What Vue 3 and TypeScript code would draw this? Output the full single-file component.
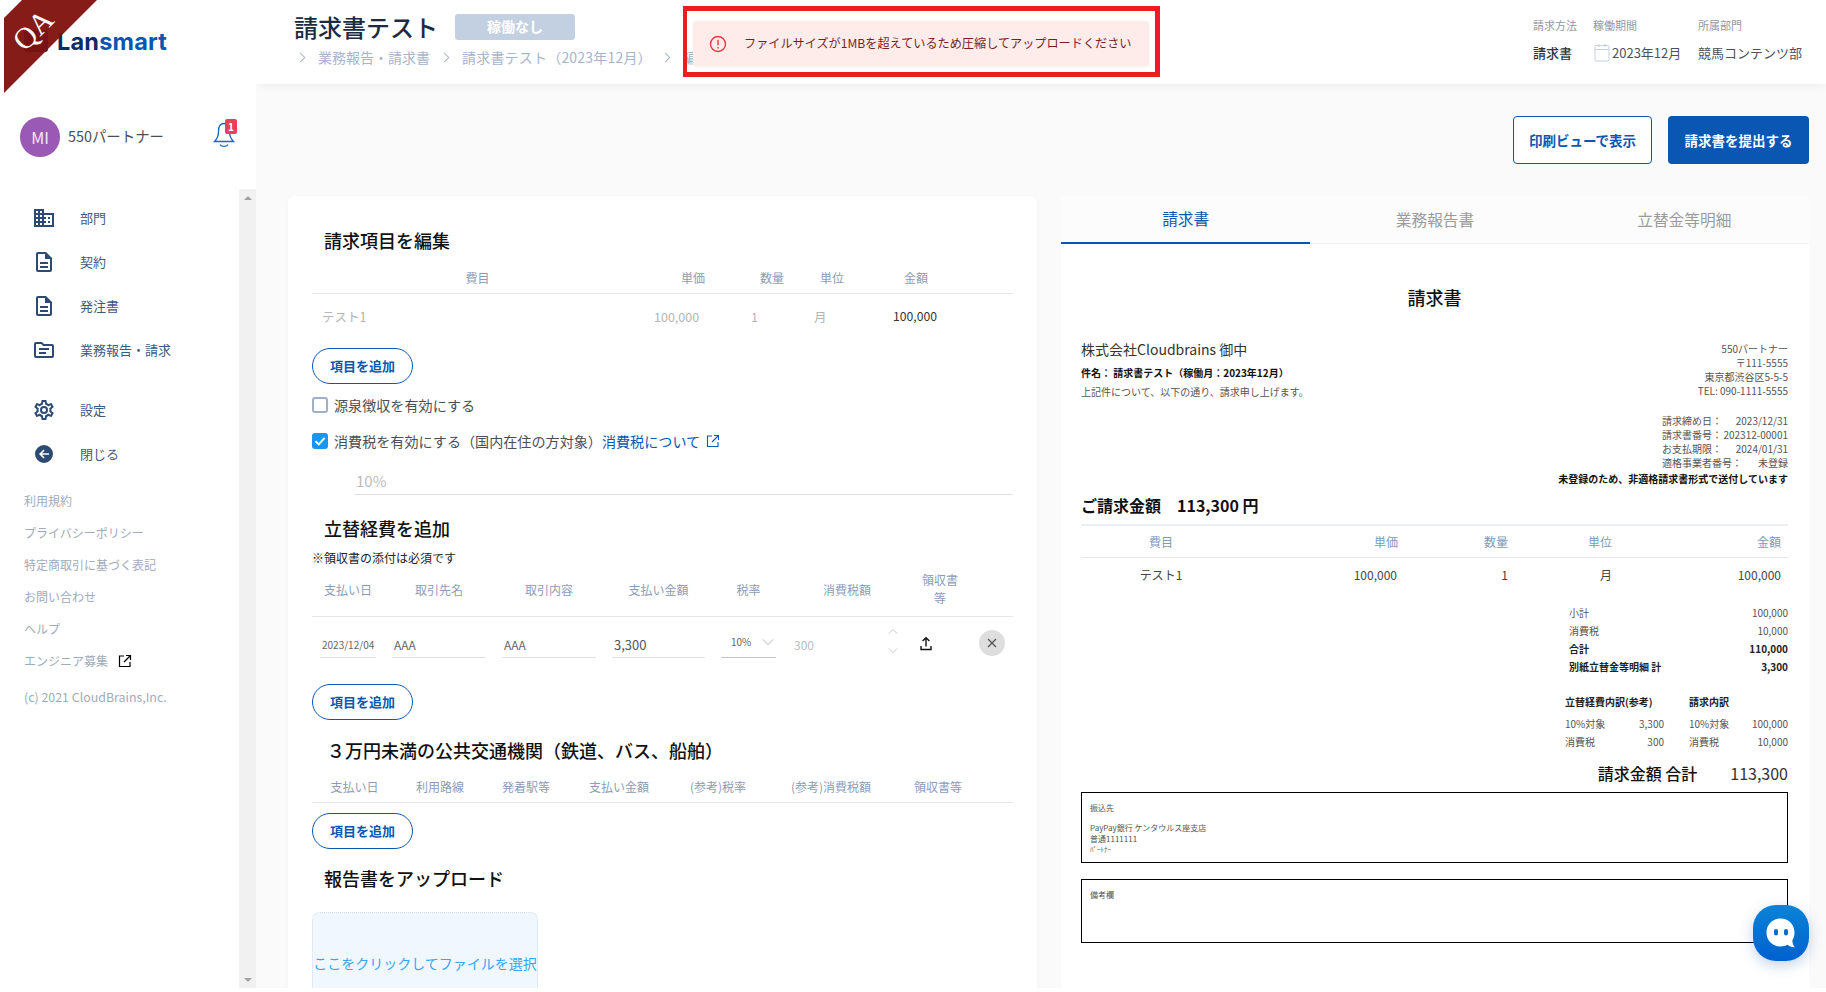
<script setup lang="ts">
interface NavItem { label: string; path: string }
const fileDoc = 'M6,2A2,2 0 0,0 4,4V20A2,2 0 0,0 6,22H18A2,2 0 0,0 20,20V8L14,2H6M6,4H13V9H18V20H6V4M8,12V14H16V12H8M8,16V18H16V16H8Z'
const nav1: NavItem[] = [
  { label: '部門', path: 'M18,15H16V17H18M18,11H16V13H18M20,19H12V17H14V15H12V13H14V11H12V9H20M10,7H8V5H10M10,11H8V9H10M10,15H8V13H10M10,19H8V17H10M6,7H4V5H6M6,11H4V9H6M6,15H4V13H6M6,19H4V17H6M12,7V3H2V21H22V7H12Z' },
  { label: '契約', path: fileDoc },
  { label: '発注書', path: fileDoc },
  { label: '業務報告・請求', path: 'M4,4H10L12,6H20A2,2 0 0,1 22,8V18A2,2 0 0,1 20,20H4A2,2 0 0,1 2,18V6A2,2 0 0,1 4,4M4,6V18H20V8H11.17L9.17,6H4M7,10H17V12H7V10M7,14H14V16H7V14Z' }
]
const cog = 'M12,8A4,4 0 0,1 16,12A4,4 0 0,1 12,16A4,4 0 0,1 8,12A4,4 0 0,1 12,8M12,10A2,2 0 0,0 10,12A2,2 0 0,0 12,14A2,2 0 0,0 14,12A2,2 0 0,0 12,10M10,22C9.75,22 9.54,21.82 9.5,21.58L9.13,18.93C8.5,18.68 7.96,18.34 7.44,17.94L4.95,18.95C4.73,19.03 4.46,18.95 4.34,18.73L2.34,15.27C2.21,15.05 2.27,14.78 2.46,14.63L4.57,12.97L4.5,12L4.57,11L2.46,9.37C2.27,9.22 2.21,8.95 2.34,8.73L4.34,5.27C4.46,5.05 4.73,4.96 4.95,5.05L7.44,6.05C7.96,5.66 8.5,5.32 9.13,5.07L9.5,2.42C9.54,2.18 9.75,2 10,2H14C14.25,2 14.46,2.18 14.5,2.42L14.87,5.07C15.5,5.32 16.04,5.66 16.56,6.05L19.05,5.05C19.27,4.96 19.54,5.05 19.66,5.27L21.66,8.73C21.79,8.95 21.73,9.22 21.54,9.37L19.43,11L19.5,12L19.43,13L21.54,14.63C21.73,14.78 21.79,15.05 21.66,15.27L19.66,18.73C19.54,18.95 19.27,19.04 19.05,18.95L16.56,17.95C16.04,18.34 15.5,18.68 14.87,18.93L14.5,21.58C14.46,21.82 14.25,22 14,22H10M11.25,4L10.88,6.61C9.68,6.86 8.62,7.5 7.85,8.39L5.44,7.35L4.69,8.65L6.8,10.2C6.4,11.37 6.4,12.64 6.8,13.8L4.68,15.36L5.43,16.66L7.86,15.62C8.63,16.5 9.68,17.14 10.87,17.38L11.24,20H12.76L13.13,17.39C14.32,17.14 15.37,16.5 16.14,15.62L18.57,16.66L19.32,15.36L17.2,13.81C17.6,12.64 17.6,11.37 17.2,10.2L19.31,8.65L18.56,7.35L16.15,8.39C15.38,7.5 14.32,6.86 13.12,6.62L12.75,4H11.25Z'
const back = 'M12,3A9,9 0 1,1 12,21A9,9 0 1,1 12,3M17,11.2H10L12.6,8.6L11.5,7.5L7,12L11.5,16.5L12.6,15.4L10,12.8H17Z'
const links: string[] = ['利用規約', 'プライバシーポリシー', '特定商取引に基づく表記', 'お問い合わせ', 'ヘルプ']
const head1: string[] = ['費目', '単価', '数量', '単位', '金額', '']
const head2: string[] = ['支払い日', '取引先名', '取引内容', '支払い金額', '税率', '消費税額', '領収書等', '']
const head3: string[] = ['支払い日', '利用路線', '発着駅等', '支払い金額', '(参考)税率', '(参考)消費税額', '領収書等', '']
const tabs: string[] = ['請求書', '業務報告書', '立替金等明細']
const issuer: string[] = ['550パートナー', '〒111-5555', '東京都渋谷区5-5-5', 'TEL: 090-1111-5555']
const dates: [string, string][] = [['請求締め日：', '2023/12/31'], ['請求書番号：', '202312-00001'], ['お支払期限：', '2024/01/31'], ['適格事業者番号：', '未登録']]
</script>

<template>
  <div class="page">
    <aside class="sidebar">
      <div class="side-top">
        <div class="logo">
          <svg class="logo-mark" viewBox="0 0 24 22" width="24" height="22"><rect x="0" y="0" width="24" height="22" rx="3" fill="#0a3a8a" /></svg>
          <span class="logo-text"><span class="lan">Lan</span><span class="smart">smart</span></span>
        </div>
        <div class="user">
          <div class="avatar">MI</div>
          <span class="user-name">550パートナー</span>
          <span class="bell">
            <svg viewBox="0 0 24 28" width="24" height="28" fill="none" stroke="#1668c4" stroke-width="1.3">
              <path d="M12 3.500C7.500 3.500 6.500 7.500 6.500 11.500C6.500 16 5 19 2.500 21.500H21.500C19 19 17.500 16 17.500 11.500C17.500 7.500 16.500 3.500 12 3.500Z" />
              <path d="M8 24.500C9.500 27 14.500 27 16 24.500" />
            </svg>
            <span class="bell-badge">1</span>
          </span>
        </div>
      </div>
      <div class="side-scroll">
        <div class="side-body">
          <nav class="nav">
            <a v-for="n in nav1" :key="n.label" class="nav-item">
              <svg viewBox="0 0 24 24" width="24" height="24" fill="#2d4a73"><path :d="n.path" /></svg>
              <span>{{ n.label }}</span>
            </a>
          </nav>
          <nav class="nav nav2">
            <a class="nav-item">
              <svg viewBox="0 0 24 24" width="24" height="24" fill="#2d4a73"><path :d="cog" /></svg>
              <span>設定</span>
            </a>
            <a class="nav-item">
              <svg viewBox="0 0 24 24" width="24" height="24" fill="#2d4a73" fill-rule="evenodd"><path :d="back" /></svg>
              <span>閉じる</span>
            </a>
          </nav>
          <div class="links">
            <a v-for="l in links" :key="l" class="link">{{ l }}</a>
            <a class="link">エンジニア募集
              <svg class="ext-black" viewBox="0 0 14 14" width="14" height="14" fill="none" stroke="#000" stroke-width="1.2">
                <path d="M6 2H1.5V12.5H12V8" /><path d="M8 1.5H12.5V6" /><path d="M12.5 1.5L6 8" />
              </svg>
            </a>
            <p class="copy">(c) 2021 CloudBrains,Inc.</p>
          </div>
        </div>
        <div class="scrollbar">
          <span class="arrow up"></span>
          <span class="arrow down"></span>
        </div>
      </div>
      <div class="qa"><span>QA</span></div>
    </aside>

    <main class="main">
      <header class="topbar">
        <div class="title-block">
          <div class="title-row">
            <h1>請求書テスト</h1>
            <span class="status">稼働なし</span>
          </div>
          <div class="crumbs">
            <i class="chev"></i><span>業務報告・請求書</span>
            <i class="chev"></i><span class="crumb-long">請求書テスト（2023年12月）</span>
            <i class="chev"></i><span>編集</span>
          </div>
        </div>
        <div class="meta">
          <span class="meta-label">請求方法</span>
          <span class="meta-label">稼働期間</span>
          <span class="meta-label">所属部門</span>
          <span class="meta-value strong">請求書</span>
          <span class="meta-value period">
            <svg viewBox="0 0 16 19" width="16" height="19" fill="none" stroke="#c5d0e0" stroke-width="1">
              <rect x="1" y="2.500" width="14" height="15.500" rx="1" /><path d="M1 6.500H15M5 1V4M11 1V4" />
            </svg>2023年12月
          </span>
          <span class="meta-value">競馬コンテンツ部</span>
        </div>
        <div class="alert-frame">
          <div class="alert">
            <svg viewBox="0 0 18 18" width="18" height="18" fill="none" stroke="#e8383d" stroke-width="1.4">
              <circle cx="9" cy="9" r="7.5" /><path d="M9 4.8V10.2M9 12V13.4" />
            </svg>
            <span>ファイルサイズが1MBを超えているため圧縮してアップロードください</span>
          </div>
        </div>
      </header>

      <div class="content">
        <div class="actions">
          <button class="btn ghost">印刷ビューで表示</button>
          <button class="btn solid">請求書を提出する</button>
        </div>
        <div class="columns">
          <section class="card">
            <h2>請求項目を編集</h2>
            <div class="grid g1 ghead h1row">
              <span v-for="(h, i) in head1" :key="i">{{ h }}</span>
            </div>
            <div class="row1">
              <span class="muted c1">テスト1</span>
              <span class="muted c2">100,000</span>
              <span class="muted c3">1</span>
              <span class="muted c4">月</span>
              <span class="c5">100,000</span>
            </div>
            <button class="pill first">項目を追加</button>
            <label class="check"><span class="box"></span>源泉徴収を有効にする</label>
            <label class="check second">
              <span class="box on">
                <svg viewBox="0 0 16 16" width="16" height="16" fill="none" stroke="#fff" stroke-width="2"><path d="M3.5 8.2L6.8 11.4L12.6 4.8" /></svg>
              </span>
              消費税を有効にする（国内在住の方対象）<a class="tax-link">消費税について</a>
              <svg class="ext-blue" viewBox="0 0 14 14" width="14" height="14" fill="none" stroke="#0a57b3" stroke-width="1.1">
                <path d="M6 2H1.5V12.5H12V8" /><path d="M8 1.5H12.5V6" /><path d="M12.5 1.5L6 8" />
              </svg>
            </label>
            <div class="rate">10%</div>

            <h2 class="h-exp">立替経費を追加</h2>
            <p class="note">※領収書の添付は必須です</p>
            <div class="grid g2 ghead h2row">
              <span v-for="(h, i) in head2" :key="i" :class="{ narrow: h === '領収書等' }">{{ h }}</span>
            </div>
            <div class="grid g2 row2">
              <div class="field date"><span>2023/12/04</span></div>
              <div class="field"><span>AAA</span></div>
              <div class="field"><span>AAA</span></div>
              <div class="field amount"><span>3,300</span></div>
              <div class="field select">
                <span>10%</span>
                <svg viewBox="0 0 12 8" width="12" height="8" fill="none" stroke="#b8b8b8" stroke-width="1"><path d="M1 1.5L6 6.5L11 1.5" /></svg>
              </div>
              <div class="tax">
                <span>300</span>
                <span class="spin">
                  <svg viewBox="0 0 12 8" width="10" height="7" fill="none" stroke="#bdbdbd" stroke-width="1"><path d="M1 6.5L6 1.5L11 6.5" /></svg>
                  <svg viewBox="0 0 12 8" width="10" height="7" fill="none" stroke="#bdbdbd" stroke-width="1"><path d="M1 1.5L6 6.5L11 1.5" /></svg>
                </span>
              </div>
              <div class="up-cell">
                <svg viewBox="0 0 14 16" width="14" height="16" fill="none" stroke="#111" stroke-width="1.4"><path d="M7 10.5V2M3.6 5L7 1.8L10.4 5" /><path d="M2 10V13.5H12V10" /></svg>
              </div>
              <div class="close-cell">
                <span class="close">
                  <svg viewBox="0 0 10 10" width="10" height="10" stroke="#555" stroke-width="1.3"><path d="M1 1L9 9M9 1L1 9" /></svg>
                </span>
              </div>
            </div>
            <button class="pill">項目を追加</button>

            <h2 class="h-transit">３万円未満の公共交通機関（鉄道、バス、船舶）</h2>
            <div class="grid g3 ghead h3row">
              <span v-for="(h, i) in head3" :key="i">{{ h }}</span>
            </div>
            <button class="pill third">項目を追加</button>

            <h2 class="h-report">報告書をアップロード</h2>
            <div class="drop">ここをクリックしてファイルを選択</div>
          </section>

          <section class="panel">
            <div class="tabs">
              <div v-for="(t, i) in tabs" :key="t" class="tab" :class="{ active: i === 0 }">{{ t }}</div>
            </div>
            <div class="invoice">
              <h3>請求書</h3>
              <div class="inv-top">
                <div class="inv-left">
                  <p class="to">株式会社Cloudbrains 御中</p>
                  <p class="subject">件名： 請求書テスト（稼働月：2023年12月）</p>
                  <p class="lead">上記件について、以下の通り、請求申し上げます。</p>
                </div>
                <div class="inv-right">
                  <p v-for="l in issuer" :key="l" class="line">{{ l }}</p>
                  <div class="dates">
                    <div v-for="d in dates" :key="d[0]" class="date-row"><span>{{ d[0] }}</span><span>{{ d[1] }}</span></div>
                  </div>
                </div>
              </div>
              <p class="unreg">未登録のため、非適格請求書形式で送付しています</p>
              <p class="billed"><span>ご請求金額</span><span>113,300 円</span></p>
              <div class="inv-table head">
                <span class="ic1">費目</span><span class="ic2">単価</span><span class="ic3">数量</span><span class="ic4">単位</span><span class="ic5">金額</span>
              </div>
              <div class="inv-table body">
                <span class="ic1">テスト1</span><span class="ic2 shift">100,000</span><span class="ic3">1</span><span class="ic4">月</span><span class="ic5">100,000</span>
              </div>
              <div class="summary">
                <div class="sum-row"><span>小計</span><span>100,000</span></div>
                <div class="sum-row"><span>消費税</span><span>10,000</span></div>
                <div class="sum-row bold"><span>合計</span><span>110,000</span></div>
                <div class="sum-row bold"><span>別紙立替金等明細 計</span><span>3,300</span></div>
              </div>
              <div class="breakdown">
                <div class="bd-col">
                  <p class="bd-head">立替経費内訳(参考)</p>
                  <div class="sum-row"><span>10%対象</span><span>3,300</span></div>
                  <div class="sum-row"><span>消費税</span><span>300</span></div>
                </div>
                <div class="bd-col">
                  <p class="bd-head">請求内訳</p>
                  <div class="sum-row"><span>10%対象</span><span>100,000</span></div>
                  <div class="sum-row"><span>消費税</span><span>10,000</span></div>
                </div>
              </div>
              <div class="grand"><span class="grand-l">請求金額 合計</span><span class="grand-v">113,300</span></div>
              <div class="bank">
                <p>振込先</p>
                <p class="bank-gap">PayPay銀行 ケンタウルス座支店</p>
                <p>普通1111111</p>
                <p class="kana">ﾊﾟｰﾄﾅｰ</p>
              </div>
              <div class="remarks"><p>備考欄</p></div>
            </div>
          </section>
        </div>
      </div>
      <div class="chat">
        <svg viewBox="0 0 30 31" width="30" height="31">
          <path d="M14.500 0.500C6.500 0.500 0.500 6.500 0.500 14.500C0.500 22.500 6.500 28.500 14.500 28.500C17 28.500 19.500 27.900 21.500 26.800C23.500 28.500 26 29.500 29 29.300C27.300 27.800 26.500 25.500 26.300 22.500C27.800 20 28.500 17.500 28.500 14.500C28.500 6.500 22.500 0.500 14.500 0.500Z" fill="#fff" />
          <rect x="8" y="11" width="4" height="6.500" rx="2" fill="#0a6cd0" />
          <rect x="18" y="11" width="4" height="6.500" rx="2" fill="#0a6cd0" />
        </svg>
      </div>
    </main>
  </div>
</template>

<style>
html, body { margin: 0; background: #fff; }
</style>

<style scoped>
* { box-sizing: border-box; }
p, h1, h2, h3 { margin: 0; font-weight: 400; }
.page {
  display: flex;
  height: 988px;
  width: 1826px;
  overflow: hidden;
  font-family: "Noto Sans CJK JP", "Noto Sans", sans-serif;
  color: #333;
  position: relative;
}
/* sidebar */
.sidebar { width: 256px; flex: none; display: flex; flex-direction: column; background: #fff; position: relative; z-index: 3; }
.side-top { height: 189px; flex: none; }
.logo { height: 84px; display: flex; align-items: center; padding: 0 0 0 24px; gap: 9px; }
.logo-mark { flex: none; margin-top: -2px; }
.logo-text { font-family: Inter, "Liberation Sans", sans-serif; font-weight: 700; font-size: 23.5px; line-height: 1; letter-spacing: 0.2px; }
.lan { color: #0c2c66; }
.smart { color: #0a57b3; }
.user { display: flex; align-items: center; padding-left: 20px; margin-top: 33px; height: 40px; position: relative; }
.avatar { width: 40px; height: 40px; border-radius: 50%; background: #9b59b6; color: #f4e9f8; font-size: 16px; display: flex; align-items: center; justify-content: center; }
.user-name { margin-left: 8px; font-size: 14.4px; color: #4a4f57; padding-bottom: 4px; }
.bell { position: absolute; left: 212px; top: 3px; width: 24px; height: 28px; }
.bell-badge { position: absolute; left: 13px; top: -1px; width: 12px; height: 15px; border-radius: 2px; background: #e8405a; color: #fff; font-size: 10px; font-weight: 700; line-height: 15px; text-align: center; }
.side-scroll { flex: 1; display: flex; min-height: 0; }
.side-body { flex: 1; padding-top: 7px; }
.scrollbar { width: 17px; flex: none; background: #f1f1f1; position: relative; display: flex; flex-direction: column; justify-content: space-between; align-items: center; padding: 7px 0 6px; }
.arrow { width: 0; height: 0; border-left: 4px solid transparent; border-right: 4px solid transparent; }
.arrow.up { border-bottom: 4px solid #a3a3a3; }
.arrow.down { border-top: 4px solid #a3a3a3; }
.nav-item { display: flex; align-items: center; height: 44px; padding-left: 32px; color: #3f5a7d; font-size: 13px; }
.nav-item svg { flex: none; }
.nav-item span { margin-left: 24px; padding-bottom: 2px; }
.nav2 { margin-top: 16px; }
.links { margin-top: 9px; padding-left: 24px; }
.link { display: flex; align-items: center; height: 32px; font-size: 12px; color: #a0abba; padding-bottom: 2px; }
.ext-black { margin-left: 10px; margin-top: 2px; }
.copy { margin-top: 11px; height: 18px; line-height: 18px; font-size: 12.4px; color: #a0abba; }
.qa {
  position: absolute; left: 4px; top: 0; width: 93px; height: 93px;
  background: rgba(128, 16, 12, 0.95);
  clip-path: polygon(18px 0, 93px 0, 0 93px, 0 18px);
}
.qa span {
  position: absolute; left: 4px; top: 15px; width: 50px; text-align: center;
  font-family: "Liberation Serif", serif; font-size: 30px; line-height: 30px; color: #fff;
  transform: rotate(-45deg);
}
/* main */
.main { flex: 1; min-width: 0; background: #fafafa; display: flex; flex-direction: column; position: relative; }
.topbar { height: 84px; flex: none; background: #fff; display: flex; justify-content: space-between; position: relative; box-shadow: 0 2px 10px rgba(0, 0, 0, 0.05); z-index: 1; }
.title-block { padding: 11px 0 0 38px; }
.title-row { display: flex; align-items: center; height: 32px; }
h1 { font-size: 24px; font-weight: 500; line-height: 32px; color: #1c2b3f; }
.status { margin-left: 17px; width: 120px; height: 26px; border-radius: 3px; background: #c3d0e2; color: #fff; font-size: 14px; font-weight: 700; line-height: 24px; text-align: center; }
.crumbs { display: flex; align-items: center; margin-top: 4px; height: 20px; padding-left: 3px; font-size: 14px; color: #a6b4cc; white-space: nowrap; }
.chev { width: 7px; height: 7px; flex: none; border-top: 1px solid #a6b4cc; border-right: 1px solid #a6b4cc; transform: rotate(45deg); margin-right: 14px; }
.crumbs span { margin-right: 11px; }
.crumbs .crumb-long { margin-right: 10px; letter-spacing: 0.2px; }
.meta { display: grid; grid-template-columns: 60px 105px 112px; grid-template-rows: 22px 20px; row-gap: 7px; padding: 14px 16px 0 0; align-content: start; }
.meta-label { font-size: 11px; color: #8f98a5; line-height: 22px; }
.meta-value { font-size: 13px; color: #4c525a; line-height: 20px; white-space: nowrap; }
.meta-value.strong { color: #2c3440; font-weight: 500; }
.period { display: flex; align-items: center; margin-left: 1px; gap: 2px; }
.period svg { margin-bottom: 2px; flex: none; }
.alert-frame { position: absolute; left: 427px; top: 6px; width: 477px; height: 71px; border: 5px solid #ed1c24; border-left-width: 4px; padding: 10px 6px 0 6px; }
.alert { height: 45px; background: #feeceb; border-radius: 3px; display: flex; align-items: center; padding-left: 16px; font-size: 12.15px; color: #7a1f1f; box-shadow: 0 1px 3px rgba(0, 0, 0, 0.06); white-space: nowrap; overflow: hidden; }
.alert svg { flex: none; margin-right: 17px; }
.alert span { padding-bottom: 2px; }
.content { padding: 32px 17px 0 32px; min-height: 0; flex: 1; overflow: hidden; }
.actions { display: flex; justify-content: flex-end; gap: 16px; height: 48px; margin-bottom: 32px; }
.btn { height: 48px; border-radius: 4px; font-family: inherit; font-size: 13.5px; font-weight: 700; }
.ghost { width: 139px; background: #fff; color: #0a57b3; border: 1px solid #0a57b3; }
.solid { width: 141px; background: #0a57b3; color: #fff; border: none; }
.columns { display: grid; grid-template-columns: 749px 748px; column-gap: 24px; align-items: start; }
.card { background: #fff; border-radius: 6px; padding: 32px 24px 0; height: 830px; box-shadow: 0 1px 4px rgba(0, 0, 0, 0.03); }
h2 { font-size: 18px; font-weight: 500; height: 28px; line-height: 24px; color: #111; padding-left: 12px; }
.grid { display: grid; }
.g2 { grid-template-columns: 72px 110px 110px 109px 71px 126px 60px 43px; }
.g3 { grid-template-columns: 85px 86px 86px 100px 98px 128px 86px 32px; }
.g1 { grid-template-columns: 331px 100px 58px 62px 106px 44px; }
.ghead { font-size: 12px; color: #8c9cb8; text-align: center; align-items: center; border-bottom: 1px solid #e5e7eb; }
.h1row { margin-top: 8px; height: 30px; padding-bottom: 3px; }
.row1 { display: flex; height: 46px; align-items: center; font-size: 12.5px; color: #333; position: relative; padding-bottom: 2px; }
.row1 span { white-space: nowrap; }
.muted { color: #b5b5b5; }
.c1 { margin-left: 10px; width: 332px; }
.c2 { width: 97px; }
.c3 { width: 63px; }
.c4 { width: 79px; }
.c5 { font-size: 12.2px; }
.pill { display: block; width: 101px; height: 36px; border-radius: 18px; background: #fff; border: 1px solid #0a57b3; color: #0a57b3; font-family: inherit; font-size: 13px; font-weight: 700; padding: 0 0 2px; margin-top: 8px; }
.first { margin-top: 8px; }
.check { display: flex; align-items: center; height: 32px; margin-top: 6px; font-size: 14.1px; color: #4a4f57; padding-bottom: 2px; }
.second { margin-top: 4px; }
.box { width: 16px; height: 16px; flex: none; border: 2px solid #9fb0c6; border-radius: 3px; margin-right: 6px; }
.box.on { background: #1a96f0; border: none; }
.tax-link { color: #0a57b3; }
.ext-blue { margin-left: 6px; }
.rate { margin-left: 42px; height: 37px; padding: 14px 0 0 2px; line-height: 18px; font-size: 15px; color: #bcbcbc; border-bottom: 1px solid #e2e2e2; }
.h-exp { margin-top: 21px; }
.note { margin-top: 5px; height: 18px; line-height: 17px; font-size: 12px; color: #222; }
.h2row { height: 50px; padding-bottom: 5px; }
.narrow { width: 40px; justify-self: center; line-height: 18px; }
.row2 { height: 59px; position: relative; }
.field { margin: 0 8px; height: 41px; border-bottom: 1px solid #e2e2e2; display: flex; align-items: flex-end; padding: 0 2px 2px; font-size: 12px; color: #666; line-height: 20px; }
.date { font-size: 10px; padding-left: 2px; margin-right: 8px; white-space: nowrap; }
.amount { font-size: 13px; color: #555; }
.select { border-bottom-color: #c4c4c4; justify-content: space-between; padding: 16px 2px 6px 10px; font-size: 10px; align-items: center; height: 41px; }
.tax { display: flex; justify-content: space-between; align-items: flex-start; padding: 18px 15px 0 10px; font-size: 12px; color: #bdbdbd; line-height: 20px; position: relative; }
.spin { display: flex; flex-direction: column; gap: 12px; margin-top: -7px; margin-right: -3px; }
.up-cell { display: flex; justify-content: center; padding-top: 19px; padding-right: 28px; }
.close-cell { display: flex; justify-content: flex-start; padding: 13px 0 0 9px; }
.close { width: 26px; height: 26px; border-radius: 50%; background: #dedede; display: flex; align-items: center; justify-content: center; }
.h-transit { margin-top: 18px; padding-left: 15px; }
.h3row { margin-top: 8px; height: 29px; padding-bottom: 3px; }
.third { margin-top: 10px; }
.h-report { margin-top: 17px; }
.drop { margin-top: 18px; width: 226px; height: 104px; background: #f0f7fe; border: 1px dotted #d4dfea; border-radius: 8px; color: #33a6f5; font-size: 14px; display: flex; align-items: center; justify-content: center; white-space: nowrap; padding-bottom: 3px; }
/* invoice panel */
.panel { background: #fff; height: 800px; }
.tabs { display: grid; grid-template-columns: repeat(3, 1fr); height: 48px; background: #fcfcfc; border-bottom: 1px solid #f1f1f1; }
.tab { font-size: 15.7px; color: #9b9b9b; display: flex; align-items: center; justify-content: center; padding-bottom: 2px; }
.tab.active { color: #0a57b3; border-bottom: 2px solid #0a57b3; height: 48px; }
.invoice { padding: 41px 21px 0 20px; color: #444; }
h3 { text-align: center; font-size: 18px; font-weight: 500; line-height: 24px; color: #111; }
.inv-top { display: flex; justify-content: space-between; margin-top: 33px; }
.to { font-size: 14px; line-height: 14px; color: #333; }
.subject { margin-top: 10px; font-size: 10px; line-height: 14px; font-weight: 700; color: #111; }
.lead { margin-top: 5px; font-size: 10px; line-height: 14px; color: #555; }
.inv-right { text-align: right; font-size: 10px; line-height: 14px; color: #555; }
.line { white-space: nowrap; }
.dates { margin-top: 16px; width: 126px; margin-left: auto; }
.date-row { display: flex; justify-content: space-between; }
.unreg { margin-top: 2px; text-align: right; font-size: 10px; line-height: 14px; font-weight: 700; color: #111; }
.billed { margin-top: 7px; display: flex; gap: 16px; font-size: 16px; font-weight: 700; line-height: 24px; color: #111; }
.inv-table { position: relative; display: grid; grid-template-columns: 160px 157px 110px 104px 176px; font-size: 12px; align-items: center; }
.head { margin-top: 7px; height: 34px; border-top: 2px solid #eceef5; border-bottom: 1px solid #e8e8e8; color: #8099bd; }
.body { height: 32px; color: #444; }
.ic1 { text-align: center; }
.ic2 { text-align: right; }
.ic3 { text-align: right; }
.ic4 { text-align: right; }
.ic5 { text-align: right; padding-right: 7px; }
.ic2.shift { padding-right: 1px; }
.summary { margin: 14px 0 0 auto; width: 219px; }
.sum-row { display: flex; justify-content: space-between; font-size: 10px; line-height: 18px; color: #555; }
.sum-row.bold { font-weight: 700; color: #222; }
.breakdown { margin: 17px 0 0 auto; width: 223px; display: grid; grid-template-columns: 99px 99px; justify-content: space-between; }
.bd-head { font-size: 10px; font-weight: 700; line-height: 18px; color: #222; margin-bottom: 4px; white-space: nowrap; }
.grand { margin-top: 10px; display: flex; justify-content: flex-end; align-items: center; height: 24px; }
.grand-l { font-size: 16px; font-weight: 500; color: #111; }
.grand-v { margin-left: 33px; font-size: 16px; color: #333; }
.bank { margin-top: 7px; height: 71px; border: 1px solid #000; padding: 9px 8px 0; font-size: 8px; line-height: 11px; color: #555; }
.bank-gap { margin-top: 9px; }
.kana { font-size: 7px; }
.remarks { margin-top: 16px; height: 64px; border: 1px solid #000; padding: 9px 8px 0; font-size: 8px; line-height: 11px; color: #555; }
.chat { position: absolute; left: 1497px; top: 905px; width: 56px; height: 56px; border-radius: 23px; background: linear-gradient(180deg, #0a84d6, #0060d0); box-shadow: 0 4px 14px rgba(0, 80, 180, 0.25); display: flex; align-items: center; justify-content: center; z-index: 2; }
</style>
